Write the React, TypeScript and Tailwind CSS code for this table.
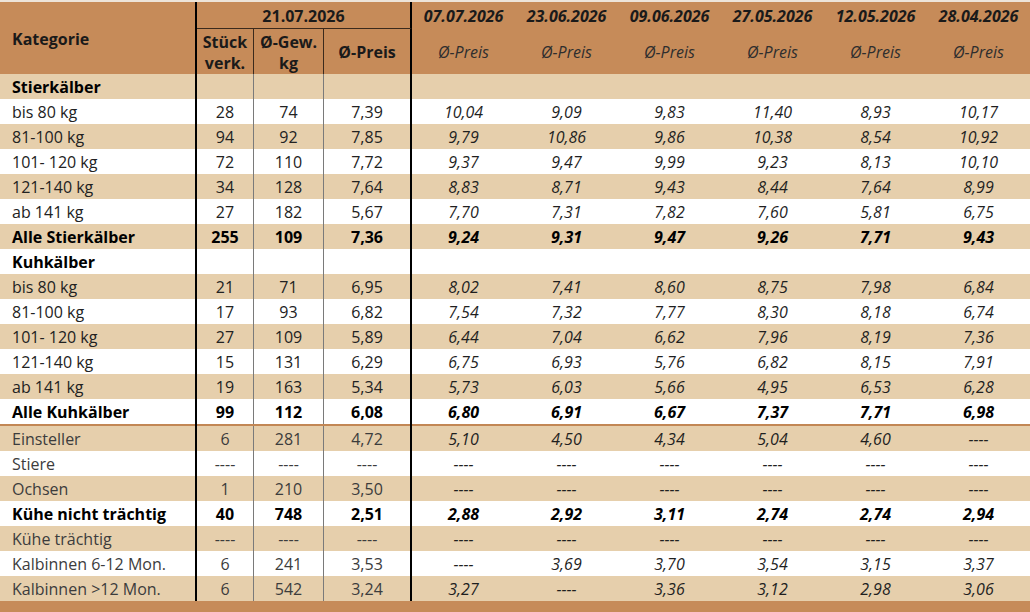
const dates = ['07.07.2026', '23.06.2026', '09.06.2026', '27.05.2026', '12.05.2026', '28.04.2026'];

type Row = {
    label: string;
    kind: 'group' | 'normal' | 'total';
    vals?: string[];
    hist?: string[];
};

const D = '----';

const upper: Row[] = [
    { label: 'Stierkälber', kind: 'group' },
    { label: 'bis 80 kg', kind: 'normal', vals: ['28', '74', '7,39'], hist: ['10,04', '9,09', '9,83', '11,40', '8,93', '10,17'] },
    { label: '81-100 kg', kind: 'normal', vals: ['94', '92', '7,85'], hist: ['9,79', '10,86', '9,86', '10,38', '8,54', '10,92'] },
    { label: '101- 120 kg', kind: 'normal', vals: ['72', '110', '7,72'], hist: ['9,37', '9,47', '9,99', '9,23', '8,13', '10,10'] },
    { label: '121-140 kg', kind: 'normal', vals: ['34', '128', '7,64'], hist: ['8,83', '8,71', '9,43', '8,44', '7,64', '8,99'] },
    { label: 'ab 141 kg', kind: 'normal', vals: ['27', '182', '5,67'], hist: ['7,70', '7,31', '7,82', '7,60', '5,81', '6,75'] },
    { label: 'Alle Stierkälber', kind: 'total', vals: ['255', '109', '7,36'], hist: ['9,24', '9,31', '9,47', '9,26', '7,71', '9,43'] },
    { label: 'Kuhkälber', kind: 'group' },
    { label: 'bis 80 kg', kind: 'normal', vals: ['21', '71', '6,95'], hist: ['8,02', '7,41', '8,60', '8,75', '7,98', '6,84'] },
    { label: '81-100 kg', kind: 'normal', vals: ['17', '93', '6,82'], hist: ['7,54', '7,32', '7,77', '8,30', '8,18', '6,74'] },
    { label: '101- 120 kg', kind: 'normal', vals: ['27', '109', '5,89'], hist: ['6,44', '7,04', '6,62', '7,96', '8,19', '7,36'] },
    { label: '121-140 kg', kind: 'normal', vals: ['15', '131', '6,29'], hist: ['6,75', '6,93', '5,76', '6,82', '8,15', '7,91'] },
    { label: 'ab 141 kg', kind: 'normal', vals: ['19', '163', '5,34'], hist: ['5,73', '6,03', '5,66', '4,95', '6,53', '6,28'] },
    { label: 'Alle Kuhkälber', kind: 'total', vals: ['99', '112', '6,08'], hist: ['6,80', '6,91', '6,67', '7,37', '7,71', '6,98'] },
];

const lower: Row[] = [
    { label: 'Einsteller', kind: 'normal', vals: ['6', '281', '4,72'], hist: ['5,10', '4,50', '4,34', '5,04', '4,60', D] },
    { label: 'Stiere', kind: 'normal', vals: [D, D, D], hist: [D, D, D, D, D, D] },
    { label: 'Ochsen', kind: 'normal', vals: ['1', '210', '3,50'], hist: [D, D, D, D, D, D] },
    { label: 'Kühe nicht trächtig', kind: 'total', vals: ['40', '748', '2,51'], hist: ['2,88', '2,92', '3,11', '2,74', '2,74', '2,94'] },
    { label: 'Kühe trächtig', kind: 'normal', vals: [D, D, D], hist: [D, D, D, D, D, D] },
    { label: 'Kalbinnen 6-12 Mon.', kind: 'normal', vals: ['6', '241', '3,53'], hist: [D, '3,69', '3,70', '3,54', '3,15', '3,37'] },
    { label: 'Kalbinnen >12 Mon.', kind: 'normal', vals: ['6', '542', '3,24'], hist: ['3,27', D, '3,36', '3,12', '2,98', '3,06'] },
];

const grid = 'grid grid-cols-[197px_57px_70px_88px_repeat(6,103px)]';

const TableRow = ({ row, striped, muted }: { row: Row; striped: boolean; muted?: boolean }) => {
    const bold = row.kind !== 'normal';
    const normalText = muted ? 'text-[#3c3c3c]' : 'text-[#222222]';
    const txt = bold ? 'font-bold text-black' : normalText;
    return (
        <div className={`${grid} h-[25px] ${striped ? 'bg-[#e6cfac]' : 'bg-white'}`}>
            <div className={`flex items-center pl-3 pt-[2px] border-r-2 border-black whitespace-nowrap ${txt}`}>{row.label}</div>
            <div className={`flex items-center justify-center pt-[2px] border-r border-[#7a7a7a] ${txt}`}>{row.vals?.[0]}</div>
            <div className={`flex items-center justify-center pt-[2px] border-r border-[#7a7a7a] ${txt}`}>{row.vals?.[1]}</div>
            <div className={`flex items-center justify-center pt-[2px] border-r-2 border-black ${txt}`}>{row.vals?.[2]}</div>
            {dates.map((d, i) => (
                <div key={d} className={`flex items-center justify-center pt-[2px] italic ${bold ? 'font-bold text-black' : 'text-[#1f1f1f]'}`}>
                    {row.hist?.[i]}
                </div>
            ))}
        </div>
    );
};

export default function App() {
    return (
        <div className="w-[1030px] h-[612px] overflow-hidden bg-white font-['Open_Sans',sans-serif] text-[16px] leading-[21px]">
            <div className="h-[2px] bg-[#ede4d9]" />

            {/* Header */}
            <div className={`${grid} grid-rows-[27px_45px] bg-[#c68b59] text-[#1a1a1a]`}>
                <div className="row-span-2 flex items-center pl-3 pt-[3px] font-bold border-r-2 border-black">Kategorie</div>
                <div className="col-span-3 flex items-center justify-center pt-[2px] font-bold border-b border-[#3b2a1c] border-r-2 border-r-black">21.07.2026</div>
                {dates.map(d => (
                    <div key={d} className="flex items-center justify-center pt-[2px] font-bold italic">{d}</div>
                ))}
                <div className="flex items-center justify-center pt-[2px] text-center font-bold border-r border-[#3b2a1c]">Stück<br />verk.</div>
                <div className="flex items-center justify-center pt-[2px] text-center font-bold border-r border-[#3b2a1c]">Ø-Gew.<br />kg</div>
                <div className="flex items-center justify-center pt-[2px] font-bold border-r-2 border-black">Ø-Preis</div>
                {dates.map(d => (
                    <div key={d} className="flex items-center justify-center pt-[2px] italic text-[#2e2e2e]">Ø-Preis</div>
                ))}
            </div>

            {upper.map((r, i) => (
                <TableRow key={`u${i}`} row={r} striped={i % 2 === 0} />
            ))}

            <div className={`${grid} h-[2px] bg-[#c28755]`}>
                <div className="border-r-2 border-black" />
                <div />
                <div />
                <div className="border-r-2 border-black" />
            </div>

            {lower.map((r, i) => (
                <TableRow key={`l${i}`} row={r} striped={i % 2 === 0} muted />
            ))}

            <div className="h-[11px] bg-[#c68b59]" />
        </div>
    );
}
